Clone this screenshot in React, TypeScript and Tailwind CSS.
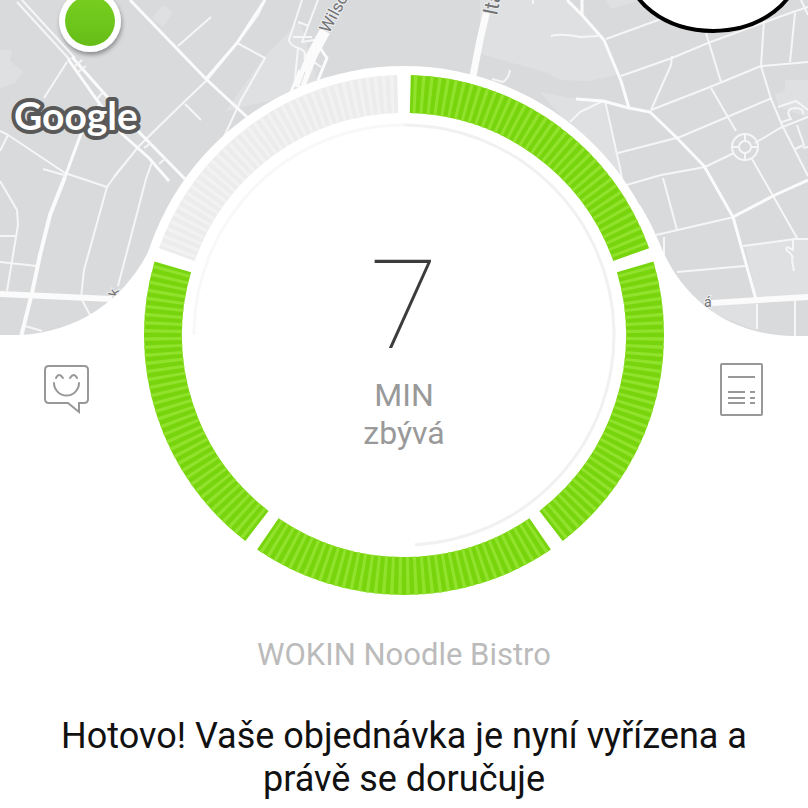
import React from "react";

const CENTER = 270;
const OUTER = 260;
const INNER = 222;
const MID = (OUTER + INNER) / 2;
const TICK = 1.8;

function point(radius: number, degrees: number) {
  const rad = (degrees * Math.PI) / 180;
  return [CENTER + radius * Math.sin(rad), CENTER - radius * Math.cos(rad)];
}

function arc(radius: number, from: number, to: number) {
  const [x1, y1] = point(radius, from);
  const [x2, y2] = point(radius, to);
  const large = to - from > 180 ? 1 : 0;
  return `M${x1} ${y1}A${radius} ${radius} 0 ${large} 1 ${x2} ${y2}`;
}

const segments = [
  { from: 1.5, to: 70.5, base: "#78d50d", tick: "#90e22c" },
  { from: 73.6, to: 142.4, base: "#78d50d", tick: "#90e22c" },
  { from: 145.6, to: 214.4, base: "#78d50d", tick: "#90e22c" },
  { from: 217.6, to: 286.4, base: "#78d50d", tick: "#90e22c" },
  { from: 289.5, to: 358.5, base: "#ececec", tick: "#f2f2f2" },
];

const tickLength = (TICK * Math.PI * MID) / 180;

function ProgressRing() {
  return (
    <svg viewBox="0 0 540 540" className="block w-full" fill="none" aria-hidden="true">
      <circle cx="270" cy="270" r="269" fill="#fff" />
      {segments.map((s) => (
        <g key={s.from} strokeWidth={OUTER - INNER}>
          <path d={arc(MID, s.from, s.to)} stroke={s.base} />
          <path
            d={arc(MID, s.from, s.to)}
            stroke={s.tick}
            strokeDasharray={`${tickLength * 0.42} ${tickLength * 0.58}`}
            strokeDashoffset={-tickLength * 0.4}
          />
        </g>
      ))}
      <path d={arc(210, 0, 177)} stroke="#f1f1f2" strokeWidth="3" />
      <path d={arc(210, 270, 360)} stroke="#f8f8f8" strokeWidth="3" />
    </svg>
  );
}

const parks = [
  "M0 50H12L10 61L23 72L15 83L0 88Z",
  "M152 18L163 5L173 12L163 27Z",
  "M480 0H568L580 14L603 38L620 74L590 81L560 80L545 72L480 54Z",
  "M606 0H640L611 9Z",
  "M540 92L576 99L603 101L622 178L600 160L560 115Z",
  "M775 95L785 90V80H808V118L779 107Z",
  "M745 245L808 238V297L757 298Z",
  "M695 304H756V330L720 316Z",
  "M262 60L300 20L320 90L250 105L225 112Z",
];

const minorRoads = [
  "M67 62L44 98",
  "M0 131L8 135L65 173L107 187L120 169",
  "M8 135L0 151",
  "M43 169L64 175",
  "M114 177L139 146L185 101L207 80L238 42L258 15L265 0",
  "M178 46L211 17",
  "M237 43L265 58L241 100L223 139",
  "M185 104L201 120",
  "M152 162L146 179L118 286",
  "M107 187L84 270L81 298L90 315",
  "M0 181L17 210L18 225L7 291",
  "M0 236H17M0 262L37 266M25 326L42 331",
  "M302 0L290 37Q286 43 298 48Q308 51 304 59",
  "M318 0L302 42L314 40M298 22L309 26",
  "M293 37H312M298 48L295 79M304 55L321 67",
  "M551 36Q561 33 580 37L598 36",
  "M606 39L661 19",
  "M621 76L672 58L708 43L790 13L808 7",
  "M651 110L671 65L672 56",
  "M706 33L721 82M711 88L736 131M752 159L764 180L797 238",
  "M651 110L710 87L761 66L808 62",
  "M764 20L761 66L771 99L782 125L808 176",
  "M795 13L790 62",
  "M680 137L772 98",
  "M618 153L680 137M605 101L620 168L623 184",
  "M623 186L661 175L705 167L734 153M755 143L780 128L808 117",
  "M570 122L580 112L603 101M576 99L603 101",
  "M663 178L677 230M656 235L734 217",
  "M743 246L795 239H808M677 272L745 266",
  "M664 237V255M757 304V329M795 300V336",
  "M778 107L796 101L808 110",
  "M782 122L791 119Q784 109 795 108Q804 108 803 114",
  "M797 125L804 145L795 149M803 148L808 147",
  "M801 0L808 15",
  "M533 0V4M492 79L503 82Q509 78 510 70",
  "M793 238V250Q784 244 787 251Q794 255 792 260L794 271",
];

const majorRoads = [
  "M130 0L181 53L206 79L247 117",
  "M265 0L237 43L206 79",
  "M68 59L94 96L122 134L149 158L169 181",
  "M72 57L102 91L139 132L185 179",
  "M100 104L82 131L65 177",
  "M567 0L582 15L604 40L621 81L629 108L650 112L676 137L704 166L733 217L757 303",
  "M582 15V0M576 99L603 101L629 108",
  "M733 217L775 195L808 180",
];

function CityMap() {
  return (
    <svg
      viewBox="0 0 808 340"
      preserveAspectRatio="xMidYMin slice"
      className="absolute inset-x-0 top-0 w-full"
      fill="none"
      aria-hidden="true"
    >
      <defs>
        <linearGradient id="pin" x1="0" y1="0" x2="0" y2="1">
          <stop offset="0" stopColor="#78cf20" />
          <stop offset="1" stopColor="#66bd18" />
        </linearGradient>
        <filter id="pinShadow" x="-30%" y="-30%" width="160%" height="160%">
          <feDropShadow dx="1" dy="3" stdDeviation="2" floodColor="#000" floodOpacity="0.35" />
        </filter>
      </defs>
      <path d="M0 0H808V340H0Z" fill="#d9dadc" />
      <g fill="#dfe0e2">
        {parks.map((d) => (
          <path key={d} d={d} />
        ))}
      </g>
      <g stroke="#f6f6f7" strokeWidth="2" strokeLinejoin="round">
        {minorRoads.map((d) => (
          <path key={d} d={d} />
        ))}
        <path d="M17 2L70 60M22 0L75 58" />
        <circle cx="745" cy="147" r="13" />
        <circle cx="745" cy="147" r="6" />
        <path d="M745 134V141M758 147H751M745 160V153M732 147H739" />
      </g>
      <g stroke="#fbfbfb" strokeWidth="3" strokeLinejoin="round">
        {majorRoads.map((d) => (
          <path key={d} d={d} />
        ))}
        <path d="M0 294L112 299M711 303L808 297" strokeWidth="6" />
        <path d="M65 177L50 215L40 255L32 293L21 337" strokeWidth="4" />
        <path d="M487 10L480 40L473 76" strokeWidth="7" />
        <path d="M325 31L312 55L299 88" strokeWidth="11" />
        <path d="M300 70L291 92M320 48L327 58L318 80" strokeWidth="3" />
      </g>
      <g stroke="#dfe0e2" strokeWidth="1">
        <path d="M305 72L300 86M311 74L309 84M318 66L313 82" />
      </g>
      <g stroke="#f6f6f7" strokeWidth="2">
        <path d="M74 67L82 60M78 72L86 66M97 99L103 92M144 148L151 143M159 164L166 158" />
      </g>
      <g fontFamily="Roboto, sans-serif" fill="#727376" stroke="#eeeeef" strokeWidth="2" paintOrder="stroke">
        <text transform="translate(329 34) rotate(-62)" fontSize="17">
          Wilso
        </text>
        <text transform="translate(497 16) rotate(-79)" fontSize="21">
          Ita
        </text>
        <text transform="translate(704 307)" fontSize="14">
          á
        </text>
        <text transform="translate(118 297) rotate(-80)" fontSize="14">
          k
        </text>
      </g>
      <path
        d="M0 335H20C80 332 127 298 151 246C158 232 162 218 170 205H640C648 218 653 228 659 242C680 296 725 335 794 336H808V341H0Z"
        fill="#fff"
      />
      <circle cx="90" cy="21" r="31" fill="#fff" filter="url(#pinShadow)" />
      <circle cx="90" cy="21" r="25" fill="url(#pin)" />
      <ellipse cx="713" cy="-34" rx="86" ry="65" fill="#fff" stroke="#000" strokeWidth="4" />
      <text
        x="14"
        y="130"
        fontFamily="Lato, sans-serif"
        fontSize="39"
        fontWeight="700"
        fill="#fff"
        stroke="#595959"
        strokeWidth="8"
        strokeLinejoin="round"
        paintOrder="stroke"
      >
        Google
      </text>
    </svg>
  );
}

function ChatIcon() {
  return (
    <svg width="48" height="54" viewBox="0 0 48 54" fill="none" stroke="#989898" strokeWidth="2" aria-hidden="true">
      <path d="M6 3H41Q45 3 45 7V36Q45 40 41 40H36V49L25 40H6Q2 40 2 36V7Q2 3 6 3Z" />
      <path d="M11 20A12 12 0 0 0 36 20M13 15Q16 9 20 15M27 15Q31 9 34 15" strokeLinecap="round" />
    </svg>
  );
}

function ReceiptIcon() {
  return (
    <svg width="48" height="54" viewBox="0 0 48 54" fill="none" stroke="#989898" strokeWidth="2" aria-hidden="true">
      <rect x="4" y="1" width="41" height="51" rx="1" />
      <path d="M11 14H38M11 29H28M11 35H28M11 40H28M33 29H38M33 35H38M33 40H38" />
    </svg>
  );
}

export default function App() {
  return (
    <main className="relative min-h-screen overflow-hidden bg-white font-[Roboto,sans-serif]">
      <CityMap />
      <section className="relative grid grid-cols-[1fr_minmax(0,540px)_1fr] items-center pt-[65px]">
        <button type="button" aria-label="Chat" className="mt-[110px] justify-self-center">
          <ChatIcon />
        </button>
        <div className="grid place-items-center">
          <div className="col-start-1 row-start-1 w-full">
            <ProgressRing />
          </div>
          <div className="col-start-1 row-start-1 flex flex-col items-center pt-[22px] text-[32px] leading-[38px] text-[#999]">
            <span className="mb-1 text-[124px] leading-[132px] font-thin text-[#3c3c3c]">7</span>
            <span>MIN</span>
            <span>zbývá</span>
          </div>
        </div>
        <button type="button" aria-label="Receipt" className="mt-[110px] justify-self-center">
          <ReceiptIcon />
        </button>
      </section>
      <section className="relative px-12 pt-[31px] text-center">
        <h2 className="text-[31px] leading-[38px] text-[#bbb]">WOKIN Noodle Bistro</h2>
        <h1 className="mt-[41px] text-[36px] leading-[43px] text-[#111]">
          Hotovo! Vaše objednávka je nyní vyřízena a právě se doručuje
        </h1>
      </section>
    </main>
  );
}
